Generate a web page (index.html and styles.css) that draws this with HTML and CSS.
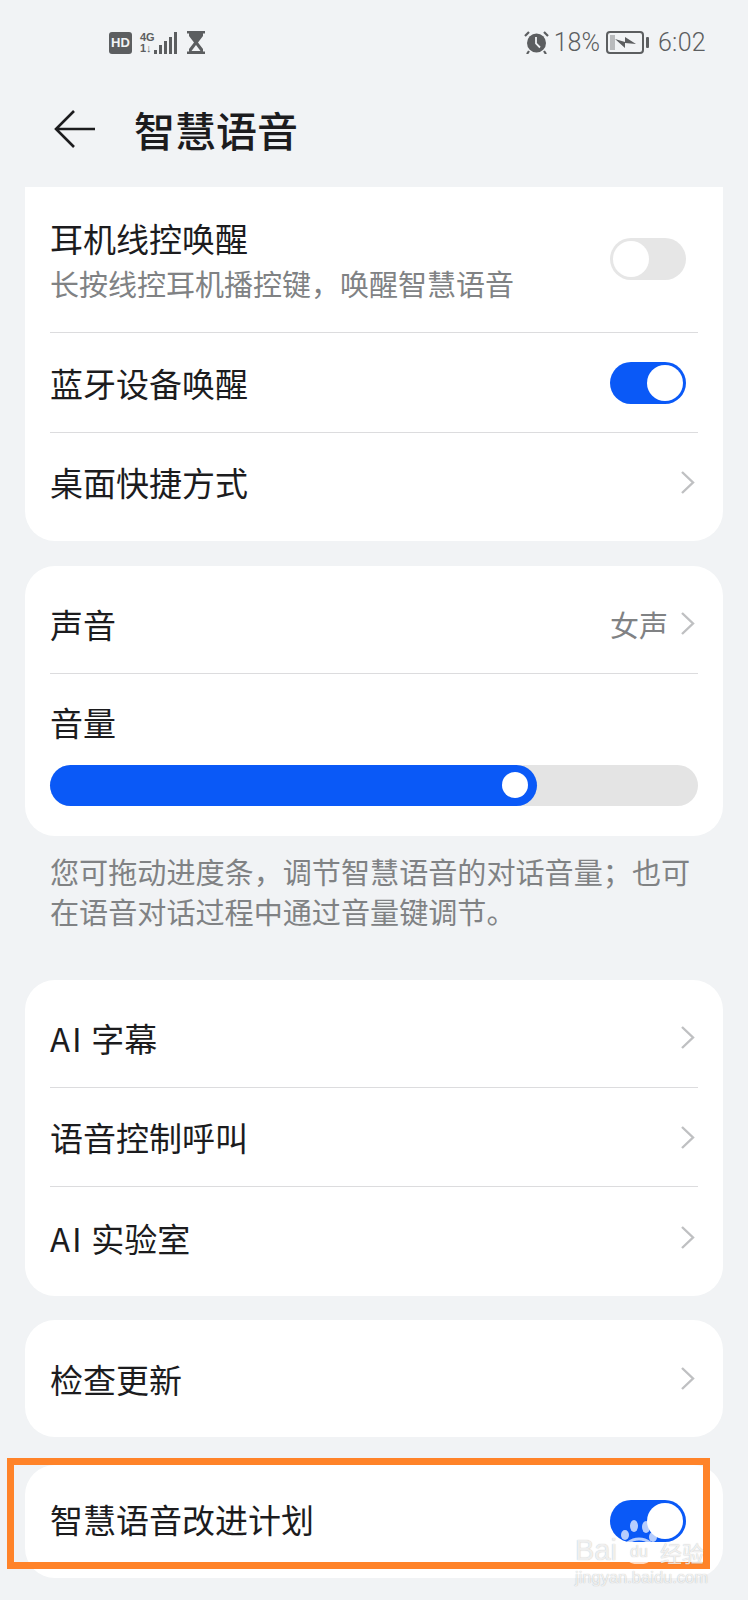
FILE: index.html
```html
<!DOCTYPE html>
<html lang="zh-CN">
<head>
    <meta charset="UTF-8">
    <meta name="viewport" content="width=device-width, initial-scale=1.0">
    <title>智慧语音</title>
    <link rel="stylesheet" href="styles.css">
</head>
<body>
    <div class="page">
        <div class="status-bar">
            <div class="status-left">
                <span class="hd-badge">HD</span>
                <span class="net">
                    <span class="net-text"><span>4G</span><span>1↓</span></span>
                    <svg width="25" height="22" viewBox="0 0 25 22"><g fill="#5c5e60"><rect x="0" y="18" width="3" height="4"/><rect x="5" y="13" width="3" height="9"/><rect x="10" y="9" width="3" height="13"/><rect x="15" y="5" width="3" height="17"/><rect x="20" y="0" width="3" height="22"/></g></svg>
                </span>
                <svg class="hourglass" width="18" height="23" viewBox="0 0 18 23"><path d="M0 0h18v2.500h-2v2.500l-5 6.500 5 6.500v2.500h2v2.500H0v-2.500h2v-2.500l5-6.500-5-6.500V2.500H0z" fill="#5c5e60"/><path d="M9 14l4.500 6h-9z" fill="#f1f3f5"/></svg>
            </div>
            <div class="status-right">
                <svg width="25" height="23" viewBox="0 0 25 23"><circle cx="12.500" cy="12" r="9.500" fill="#5c5e60"/><path d="M12 6v6.500l4 4" fill="none" stroke="#f1f3f5" stroke-width="1.800"/><path d="M1 5l4-4M24 5l-4-4M5 20l-2 3M20 20l2 3" stroke="#5c5e60" stroke-width="2.200" fill="none"/></svg>
                <span class="pct">18%</span>
                <svg class="battery" width="44" height="23" viewBox="0 0 44 23"><rect x="1" y="1" width="36" height="21" rx="3" fill="none" stroke="#5c5e60" stroke-width="2"/><rect x="4" y="4" width="5" height="15" fill="#b9bbbd"/><path d="M9 8l10 3 0-5 11 7-11-1 0 5z" fill="#5c5e60"/><rect x="40" y="6" width="3" height="11" rx="1" fill="#5c5e60"/></svg>
                <span class="time">6:02</span>
            </div>
        </div>

        <div class="header">
            <svg class="back" width="42" height="38" viewBox="0 0 42 38"><path d="M20 1L2 19l18 18M2 19h39" fill="none" stroke="#1c1c1e" stroke-width="2.600"/></svg>
            <h1>智慧语音</h1>
        </div>

        <div class="card card-top">
            <div class="row row-tall">
                <div class="row-text">
                    <div class="label">耳机线控唤醒</div>
                    <div class="sub">长按线控耳机播控键，唤醒智慧语音</div>
                </div>
                <span class="toggle"></span>
            </div>
            <div class="row row-switch">
                <div class="label">蓝牙设备唤醒</div>
                <span class="toggle on"></span>
            </div>
            <div class="row row-last">
                <div class="label">桌面快捷方式</div>
                <svg class="chev" width="15" height="25" viewBox="0 0 15 25"><path d="M2 2l11 10.500L2 23" fill="none" stroke="#bfc0c2" stroke-width="2.400"/></svg>
            </div>
        </div>

        <div class="card card-volume">
            <div class="row row-voice">
                <div class="label">声音</div>
                <div class="value">
                    <span>女声</span>
                    <svg class="chev" width="15" height="25" viewBox="0 0 15 25"><path d="M2 2l11 10.500L2 23" fill="none" stroke="#bfc0c2" stroke-width="2.400"/></svg>
                </div>
            </div>
            <div class="volume">
                <div class="label">音量</div>
                <div class="slider">
                    <div class="slider-fill"><span class="slider-knob"></span></div>
                </div>
            </div>
        </div>

        <p class="note">您可拖动进度条，调节智慧语音的对话音量；也可<br>在语音对话过程中通过音量键调节。</p>

        <div class="card card-ai">
            <div class="row row-ai">
                <div class="label"><span class="ai">AI</span> 字幕</div>
                <svg class="chev" width="15" height="25" viewBox="0 0 15 25"><path d="M2 2l11 10.500L2 23" fill="none" stroke="#bfc0c2" stroke-width="2.400"/></svg>
            </div>
            <div class="row row-ai">
                <div class="label">语音控制呼叫</div>
                <svg class="chev" width="15" height="25" viewBox="0 0 15 25"><path d="M2 2l11 10.500L2 23" fill="none" stroke="#bfc0c2" stroke-width="2.400"/></svg>
            </div>
            <div class="row row-ai">
                <div class="label"><span class="ai">AI</span> 实验室</div>
                <svg class="chev" width="15" height="25" viewBox="0 0 15 25"><path d="M2 2l11 10.500L2 23" fill="none" stroke="#bfc0c2" stroke-width="2.400"/></svg>
            </div>
        </div>

        <div class="card card-update">
            <div class="row row-single">
                <div class="label">检查更新</div>
                <svg class="chev" width="15" height="25" viewBox="0 0 15 25"><path d="M2 2l11 10.500L2 23" fill="none" stroke="#bfc0c2" stroke-width="2.400"/></svg>
            </div>
        </div>

        <div class="card card-plan">
            <div class="row row-single">
                <div class="label">智慧语音改进计划</div>
                <span class="toggle on"></span>
            </div>
        </div>

        <div class="highlight"></div>

        <div class="watermark">
            <div class="wm-logo">
                <span class="wm-bai">Bai</span>
                <div class="wm-paw">
                    <svg width="38" height="44" viewBox="0 0 38 44"><g fill="#fff" fill-opacity="0.7"><ellipse cx="5" cy="15" rx="4" ry="5"/><ellipse cx="14" cy="6" rx="4" ry="6"/><ellipse cx="26" cy="7" rx="4" ry="6"/><ellipse cx="33" cy="17" rx="4" ry="5"/></g><ellipse cx="19" cy="31" rx="15" ry="12" fill="none" stroke="#fff" stroke-opacity="0.7" stroke-width="3"/></svg>
                    <span class="wm-du">du</span>
                </div>
                <span class="wm-cn">经验</span>
            </div>
            <div class="wm-url">jingyan.baidu.com</div>
        </div>
    </div>
</body>
</html>
```

FILE: styles.css
```css
* {
    box-sizing: border-box;
}
html, body {
    margin: 0;
    padding: 0;
}
body {
    font-family: "Noto Sans CJK SC", "Noto Sans", sans-serif;
    background-color: #f1f3f5;
    color: #1c1c1e;
}
.page {
    position: relative;
    width: 748px;
    height: 1600px;
    overflow: hidden;
    padding: 0 25px;
}

/* status bar */
.status-bar {
    height: 85px;
    margin: 0 -25px;
    padding: 0 42px 0 109px;
    display: flex;
    justify-content: space-between;
    align-items: center;
    color: #5c5e60;
}
.status-left, .status-right {
    display: flex;
    align-items: center;
}
.hd-badge {
    width: 23px;
    height: 22px;
    border-radius: 3px;
    background: #5c5e60;
    color: #f1f3f5;
    font-family: "Liberation Sans", sans-serif;
    font-size: 13px;
    font-weight: bold;
    line-height: 22px;
    text-align: center;
}
.net {
    display: flex;
    align-items: flex-end;
    margin-left: 8px;
}
.net-text {
    display: flex;
    flex-direction: column;
    font-family: "Liberation Sans", sans-serif;
    font-size: 11px;
    font-weight: bold;
    line-height: 11px;
    width: 14px;
}
.hourglass {
    margin-left: 8px;
}
.status-right {
    font-family: "Roboto", sans-serif;
    font-size: 25px;
    font-weight: 300;
}
.pct {
    margin-left: 5px;
}
.battery {
    margin-left: 6px;
}
.time {
    margin-left: 8px;
    letter-spacing: 0.3px;
}

/* header */
.header {
    height: 102px;
    display: flex;
    align-items: center;
    padding: 0 0 14px 29px;
}
.back {
    flex: none;
}
.header h1 {
    margin: 0 0 0 38px;
    font-size: 41px;
    font-weight: 500;
    line-height: 56px;
}

/* cards */
.card {
    background: #fff;
    border-radius: 30px;
    padding: 0 25px;
}
.card-top {
    height: 354px;
    border-radius: 0 0 30px 30px;
}
.card-volume {
    height: 270px;
    margin-top: 25px;
}
.card-ai {
    height: 316px;
    margin-top: 30px;
}
.card-update {
    height: 117px;
    margin-top: 24px;
}
.card-plan {
    height: 113px;
    margin-top: 28px;
}
.row {
    display: flex;
    justify-content: space-between;
    align-items: center;
    border-bottom: 1px solid #dcdcde;
}
.row:last-child, .row-single {
    border-bottom: none;
}
.row-tall {
    height: 146px;
    padding-bottom: 2px;
}
.row-switch {
    height: 100px;
}
.row-last {
    height: 108px;
    padding-bottom: 10px;
}
.row-voice {
    height: 108px;
    padding-top: 8px;
}
.row-ai {
    height: 108px;
    padding-top: 8px;
}
.row-ai + .row-ai {
    height: 99px;
    padding-top: 0;
}
.row-ai:last-child {
    height: 109px;
    padding-bottom: 8px;
}
.row-single {
    height: 100%;
}
.card-plan .row {
    padding-bottom: 2px;
}
.card-plan .label {
    margin-bottom: 4px;
}
.label {
    font-size: 33px;
    line-height: 46px;
}
.ai {
    letter-spacing: 2px;
}
.sub {
    margin-top: 2px;
    font-size: 29px;
    line-height: 40px;
    color: #808284;
}
.value {
    display: flex;
    align-items: center;
    gap: 12px;
    font-size: 29px;
    color: #808284;
}
.chev {
    display: block;
    flex: none;
    margin-right: 3px;
}

/* toggles */
.toggle {
    position: relative;
    flex: none;
    width: 76px;
    height: 42px;
    margin-right: 12px;
    border-radius: 21px;
    background: #e6e6e6;
}
.toggle::after {
    content: "";
    position: absolute;
    top: 3px;
    left: 3px;
    width: 36px;
    height: 36px;
    border-radius: 50%;
    background: #fff;
}
.toggle.on {
    background: #0a59f7;
}
.toggle.on::after {
    left: 37px;
}

/* volume */
.volume {
    padding-top: 25px;
}
.slider {
    height: 41px;
    margin-top: 20px;
    border-radius: 21px;
    background: #e4e4e4;
}
.slider-fill {
    position: relative;
    width: 487px;
    height: 41px;
    border-radius: 21px;
    background: #0a59f7;
}
.slider-knob {
    position: absolute;
    top: 7px;
    right: 9px;
    width: 26px;
    height: 26px;
    border-radius: 50%;
    background: #fff;
}
.note {
    margin: 15px 0 0;
    padding: 0 25px;
    height: 99px;
    font-size: 29.1px;
    line-height: 40px;
    color: #808284;
    white-space: nowrap;
}

/* overlays */
.highlight {
    position: absolute;
    left: 7px;
    top: 1458px;
    width: 703px;
    height: 111px;
    border: 7px solid #ff8329;
}
.watermark {
    position: absolute;
    left: 575px;
    top: 1520px;
    width: 150px;
    color: rgba(255, 255, 255, 0.8);
    font-family: "Liberation Sans", sans-serif;
    text-shadow: 0 0 1px rgba(0, 0, 0, 0.3);
}
.wm-logo {
    display: flex;
    align-items: flex-end;
    height: 44px;
}
.wm-bai {
    width: 43px;
    font-size: 29px;
    line-height: 28px;
}
.wm-paw {
    position: relative;
    flex: none;
    width: 38px;
    height: 44px;
    margin-left: 2px;
}
.wm-paw svg {
    display: block;
}
.wm-du {
    position: absolute;
    left: 10px;
    top: 23px;
    font-size: 16px;
    line-height: 18px;
}
.wm-cn {
    margin-left: 2px;
    font-family: "Noto Sans CJK SC", sans-serif;
    font-size: 22px;
    line-height: 24px;
    white-space: nowrap;
}
.wm-url {
    margin-top: 4px;
    font-size: 16.5px;
    line-height: 18px;
    white-space: nowrap;
}
```
